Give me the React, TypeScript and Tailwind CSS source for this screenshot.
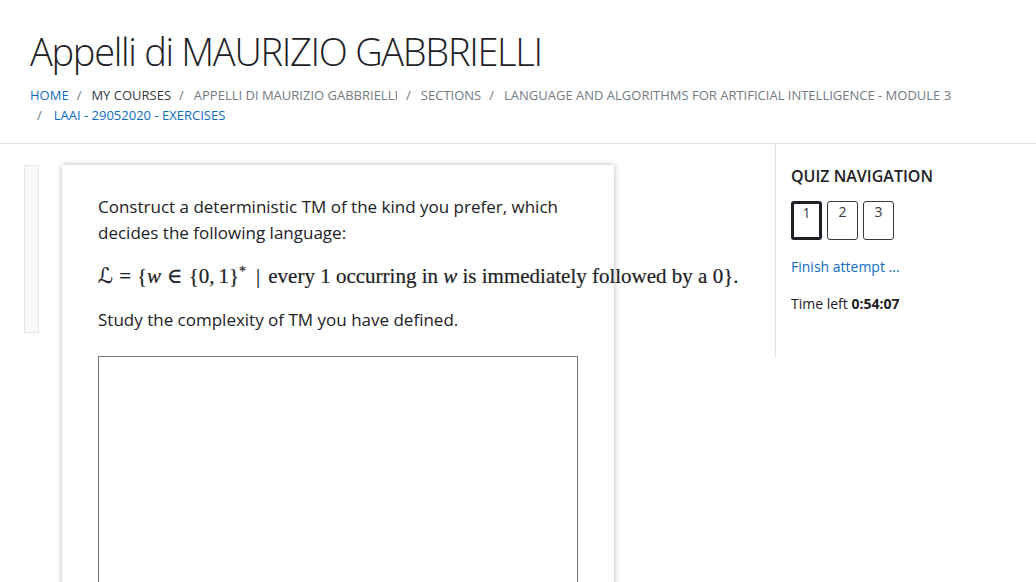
import React from "react";

export default function App() {
  const sans = { fontFamily: '"Open Sans", "Noto Sans", sans-serif' };
  const serif = { fontFamily: '"Liberation Serif", "DejaVu Serif", serif' };
  return (
    <div className="w-[1036px] h-[582px] overflow-hidden bg-white text-[#1d2125]" style={sans}>
      <header className="px-[30px] pt-[28px] border-b border-[#e3e3e3] h-[144px]">
        <h1 className="text-[38px] leading-[46px] font-light text-[#1d2125] tracking-[-1.3px]">Appelli di MAURIZIO GABBRIELLI</h1>
        <nav className="mt-[11px] text-[13px] leading-[20px] uppercase text-[#737b82]">
          <div className="whitespace-nowrap">
            <a className="text-[#0f6cbf]">Home</a>
            <span className="pl-[8px] pr-[10px]">/</span>
            <span className="text-[#343a40]">My courses</span>
            <span className="pl-[8px] pr-[10px]">/</span>
            <span>Appelli di Maurizio Gabbrielli</span>
            <span className="pl-[8px] pr-[10px]">/</span>
            <span>Sections</span>
            <span className="pl-[8px] pr-[10px]">/</span>
            <span>Language and algorithms for artificial intelligence - module 3</span>
          </div>
          <div className="whitespace-nowrap">
            <span className="pl-[7px] pr-[12px]">/</span>
            <a className="text-[#0f6cbf]">LAAI - 29052020 - Exercises</a>
          </div>
        </nav>
      </header>
      <div className="flex">
        <div className="w-[775px] flex pt-[21px] pl-[24px] gap-[23px]">
          <div className="w-[15px] h-[168px] bg-[#f8f9fa] border border-[#e6e6e6] shrink-0" />
          <div className="w-[552px] h-[500px] bg-white shadow-[0_0_6px_rgba(0,0,0,0.28)] pl-[36px] pt-[29px] shrink-0">
            <p className="text-[17px] leading-[26px] text-[#1d2125] w-[470px]">
              Construct a deterministic TM of the kind you prefer, which decides the following language:
            </p>
            <p
              className="mt-[17px] whitespace-nowrap text-[21px] leading-[26px] text-[#1d2125] [-webkit-text-stroke:0.2px_#1d2125]"
              style={serif}
            >
              <span className="italic" style={{ fontFamily: '"DejaVu Serif", "DejaVu Sans", serif' }}>ℒ</span>
              <span className="px-[6px]">=</span>
              {"{"}
              <span className="italic">w</span>
              <span className="px-[6px]">∈</span>
              {"{0,"}
              <span className="pl-[4px]">1</span>
              {"}"}
              <sup className="text-[14px]">*</sup>
              <span className="pl-[10px] pr-[8px]">|</span>
              <span>every 1 occurring in </span>
              <span className="italic">w</span>
              <span> is immediately followed by a 0</span>
              {"}."}
            </p>
            <p className="mt-[18px] text-[17px] leading-[26px] text-[#1d2125]">Study the complexity of TM you have defined.</p>
            <div className="mt-[23px] w-[480px] h-[300px] border border-[#767676] border-b-0" />
          </div>
        </div>
        <aside className="w-[261px] h-[214px] border-l border-[#dee2e6] pl-[15px] pt-[22px]">
          <h2 className="text-[16px] leading-[20px] font-semibold uppercase text-[#1d2125]">Quiz navigation</h2>
          <div className="mt-[15px] flex gap-[5px]">
            <div className="w-[31px] h-[39px] border-[3px] border-[#1d2125] rounded-[3px] text-center text-[14px] leading-[17px] text-[#343a40]">1</div>
            <div className="w-[31px] h-[39px] border border-[#343a40] rounded-[3px] text-center text-[14px] leading-[19px] text-[#343a40]">2</div>
            <div className="w-[31px] h-[39px] border border-[#343a40] rounded-[3px] text-center text-[14px] leading-[19px] text-[#343a40]">3</div>
          </div>
          <a className="block mt-[17px] text-[14px] leading-[20px] text-[#0f6cbf]">Finish attempt ...</a>
          <p className="mt-[17px] text-[14px] leading-[20px] text-[#1d2125]">
            Time left <b className="font-bold">0:54:07</b>
          </p>
        </aside>
      </div>
    </div>
  );
}
